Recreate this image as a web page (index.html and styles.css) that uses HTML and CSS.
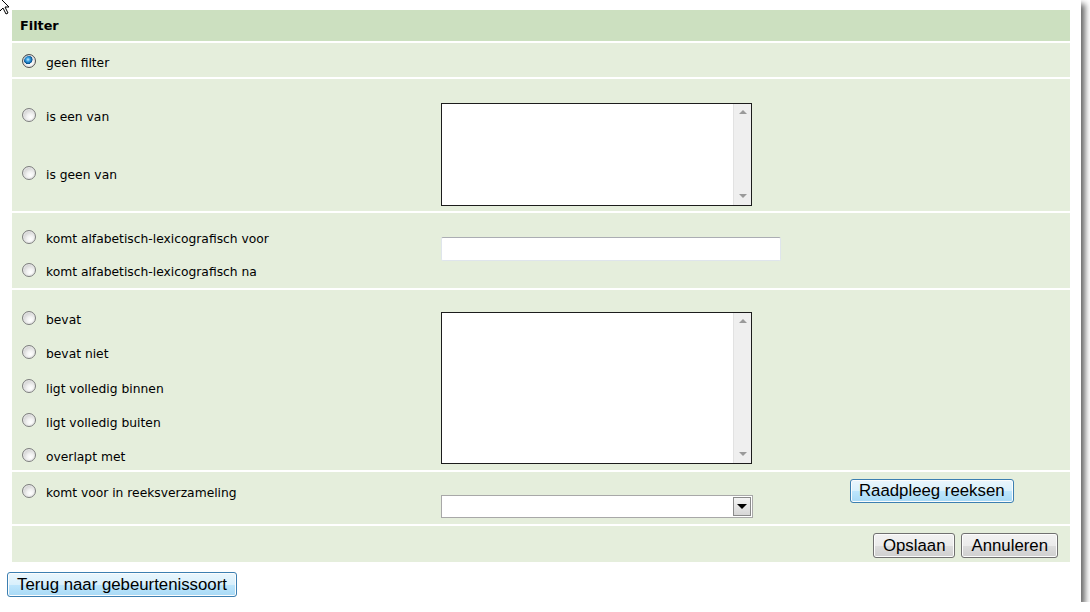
FILE: index.html
```html
<!DOCTYPE html>
<html lang="nl">
<head>
    <meta charset="UTF-8">
    <title>Filter</title>
    <link rel="stylesheet" href="styles.css">
</head>
<body>
    <div class="window">
        <div class="filter">
            <div class="filter-head">Filter</div>

            <div class="filter-row row-none">
                <div class="options">
                    <label class="opt"><input type="radio" name="filter" checked><span>geen filter</span></label>
                </div>
            </div>

            <div class="filter-row row-list">
                <div class="options">
                    <label class="opt"><input type="radio" name="filter"><span>is een van</span></label>
                    <label class="opt"><input type="radio" name="filter"><span>is geen van</span></label>
                </div>
                <div class="control">
                    <div class="listbox listbox-small">
                        <div class="listbox-area"></div>
                        <div class="scrollbar"><span class="arrow-up"></span><span class="arrow-down"></span></div>
                    </div>
                </div>
            </div>

            <div class="filter-row row-alpha">
                <div class="options">
                    <label class="opt"><input type="radio" name="filter"><span>komt alfabetisch-lexicografisch voor</span></label>
                    <label class="opt"><input type="radio" name="filter"><span>komt alfabetisch-lexicografisch na</span></label>
                </div>
                <div class="control">
                    <input type="text" class="textbox">
                </div>
            </div>

            <div class="filter-row row-range">
                <div class="options">
                    <label class="opt"><input type="radio" name="filter"><span>bevat</span></label>
                    <label class="opt"><input type="radio" name="filter"><span>bevat niet</span></label>
                    <label class="opt"><input type="radio" name="filter"><span>ligt volledig binnen</span></label>
                    <label class="opt"><input type="radio" name="filter"><span>ligt volledig buiten</span></label>
                    <label class="opt"><input type="radio" name="filter"><span>overlapt met</span></label>
                </div>
                <div class="control">
                    <div class="listbox listbox-large">
                        <div class="listbox-area"></div>
                        <div class="scrollbar"><span class="arrow-up"></span><span class="arrow-down"></span></div>
                    </div>
                </div>
            </div>

            <div class="filter-row row-series">
                <div class="options">
                    <label class="opt"><input type="radio" name="filter"><span>komt voor in reeksverzameling</span></label>
                </div>
                <div class="control control-series">
                    <div class="dropdown">
                        <div class="dropdown-value"></div>
                        <div class="dropdown-btn"><span class="arrow-drop"></span></div>
                    </div>
                    <button class="btn btn-focus btn-series">Raadpleeg reeksen</button>
                </div>
            </div>

            <div class="filter-row row-actions">
                <button class="btn">Opslaan</button>
                <button class="btn">Annuleren</button>
            </div>
        </div>

        <div class="back">
            <button class="btn btn-focus">Terug naar gebeurtenissoort</button>
        </div>

        <svg class="cursor" width="12" height="16" viewBox="0 0 12 16">
            <path d="M-4 -6 L9 7 L5 7 L8 13 L6 14 L3 8 L0 11 Z" fill="#fff" stroke="#000" stroke-width="1"/>
        </svg>
    </div>
</body>
</html>
```

FILE: styles.css
```css
body {
    margin: 0;
    background: #fff;
    font-family: 'DejaVu Sans', Verdana, sans-serif;
    font-size: 12.3px;
    color: #000;
}
.window {
    position: relative;
    width: 1081px;
    height: 602px;
    background: #fff;
    box-shadow: 4px 4px 6px rgba(0, 0, 0, 0.6);
    overflow: hidden;
}
.filter {
    display: flex;
    flex-direction: column;
    gap: 2px;
    width: 1058px;
    margin: 10px 0 0 12px;
}
.filter-head {
    height: 31px;
    line-height: 31px;
    padding-left: 8px;
    background: #cce0c0;
    font-weight: bold;
    font-size: 12.8px;
}
.filter-row {
    display: flex;
    background: #e5eedc;
}
.row-none { height: 34px; }
.row-list { height: 132px; }
.row-alpha { height: 75px; }
.row-range { height: 180px; }
.row-series { height: 52px; }
.row-actions {
    height: 36px;
    box-sizing: border-box;
    justify-content: flex-end;
    align-items: flex-start;
    gap: 6px;
    padding: 7px 12px 0 0;
}

.options {
    width: 429px;
    box-sizing: border-box;
    padding-left: 10px;
    display: flex;
    flex-direction: column;
}
.row-none .options { padding-top: 10px; }
.row-list .options { padding-top: 28px; gap: 38px; }
.row-alpha .options { padding-top: 16px; gap: 13px; }
.row-range .options { padding-top: 20px; gap: 14.3px; }
.row-series .options { padding-top: 11px; }

.opt {
    height: 20px;
    display: flex;
    align-items: center;
    white-space: nowrap;
}
.opt input {
    appearance: none;
    -webkit-appearance: none;
    width: 14px;
    height: 14px;
    margin: -5px 10px 0 0;
    border-radius: 50%;
    border: 1px solid #7d7e7e;
    background: radial-gradient(circle at 62% 68%, #ffffff 0%, #f2f2f2 30%, #d2d2d2 70%, #a9a9a9 100%);
    box-shadow: inset 0 0 0 1px #e8e8e8;
    box-sizing: border-box;
    flex: none;
}
.opt input:checked {
    background:
        radial-gradient(circle at 42% 38%, #c8ecff 0, #3fa6e6 18%, #0a5c9c 38%, #0a4f86 42%, transparent 46%),
        radial-gradient(circle at 62% 68%, #ffffff 0%, #f2f2f2 30%, #d2d2d2 70%, #a9a9a9 100%);
    border-color: #4f4f4f;
}

.control {
    flex: 1;
}
.row-list .control { padding-top: 24px; }
.row-alpha .control { padding-top: 24px; }
.row-range .control { padding-top: 22px; }

.listbox {
    display: flex;
    width: 311px;
    box-sizing: border-box;
    border: 1px solid #1c1c1c;
    background: #fff;
}
.listbox-small { height: 103px; }
.listbox-large { height: 152px; }
.listbox-area { flex: 1; }
.scrollbar {
    width: 17px;
    background: #efefef;
    border-left: 1px solid #e2e2e2;
    display: flex;
    flex-direction: column;
    justify-content: space-between;
    align-items: center;
    padding: 6px 0 7px;
}
.arrow-up {
    width: 0;
    height: 0;
    border-left: 4px solid transparent;
    border-right: 4px solid transparent;
    border-bottom: 4px solid #9a9a9a;
}
.arrow-down {
    width: 0;
    height: 0;
    border-left: 4px solid transparent;
    border-right: 4px solid transparent;
    border-top: 4px solid #9a9a9a;
}

.textbox {
    display: block;
    width: 340px;
    height: 24px;
    box-sizing: border-box;
    margin: 0;
    border: 1px solid #dfe5ec;
    border-top-color: #abadb3;
    border-radius: 2px;
    background: #fff;
}

.control-series {
    display: flex;
    align-items: flex-start;
}
.dropdown {
    display: flex;
    width: 312px;
    height: 23px;
    box-sizing: border-box;
    margin-top: 23px;
    border: 1px solid #a8a8a8;
    background: #fff;
}
.dropdown-value { flex: 1; }
.dropdown-btn {
    width: 18px;
    margin: 1px 1px 0 0;
    height: 19px;
    box-sizing: border-box;
    border: 1px solid #8a8a8a;
    background: linear-gradient(#f4f4f4, #d6d6d6);
    display: flex;
    justify-content: center;
    align-items: center;
}
.arrow-drop {
    width: 0;
    height: 0;
    border-left: 5px solid transparent;
    border-right: 5px solid transparent;
    border-top: 5px solid #000;
}

.btn {
    font-family: 'Liberation Sans', Arial, sans-serif;
    font-size: 16.8px;
    height: 25px;
    padding: 0 9px;
    margin: 0;
    color: #000;
    border: 1px solid #707070;
    border-radius: 3px;
    background: linear-gradient(#f2f2f2 0%, #ebebeb 50%, #dddddd 51%, #cfcfcf 100%);
    box-shadow: inset 0 0 0 1px #fcfcfc;
}
.btn-focus {
    border-color: #3c7fb1;
    background: linear-gradient(#eaf6fd 0%, #d9f0fc 50%, #bee6fd 51%, #a7d9f5 100%);
}
.btn-series {
    height: 24px;
    margin: 7px 0 0 97px;
    padding: 0 8px;
}

.back {
    padding: 10px 0 0 7px;
}

.cursor {
    position: absolute;
    left: 0;
    top: 0;
}
```
